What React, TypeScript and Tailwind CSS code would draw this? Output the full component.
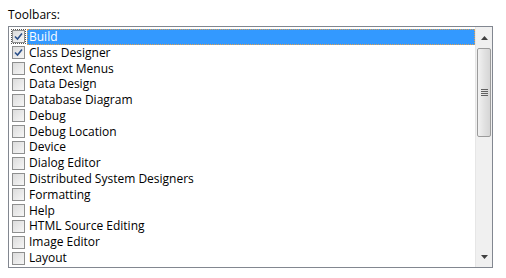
import React from 'react';

const items: { label: string; checked: boolean }[] = [
  { label: 'Build', checked: true },
  { label: 'Class Designer', checked: true },
  { label: 'Context Menus', checked: false },
  { label: 'Data Design', checked: false },
  { label: 'Database Diagram', checked: false },
  { label: 'Debug', checked: false },
  { label: 'Debug Location', checked: false },
  { label: 'Device', checked: false },
  { label: 'Dialog Editor', checked: false },
  { label: 'Distributed System Designers', checked: false },
  { label: 'Formatting', checked: false },
  { label: 'Help', checked: false },
  { label: 'HTML Source Editing', checked: false },
  { label: 'Image Editor', checked: false },
  { label: 'Layout', checked: false },
];

function CheckBox({ checked }: { checked: boolean }) {
  return (
    <div className="flex h-[13px] w-[13px] shrink-0 items-center justify-center border border-[#8e8f8f] bg-[linear-gradient(135deg,#dcdcdc,#f6f6f6)]">
      {checked && (
        <svg width="9" height="9" viewBox="0 0 9 9">
          <path d="M1 4.5 L3.5 7 L8 1.5" fill="none" stroke="#2a4f8a" strokeWidth="1.6" />
        </svg>
      )}
    </div>
  );
}

function ScrollBar() {
  return (
    <div className="flex w-[17px] shrink-0 flex-col border-l border-[#e6e6e6] bg-[#f0f0f0]">
      <div className="flex h-[21px] items-center justify-center">
        <svg width="7" height="4" viewBox="0 0 7 4">
          <path d="M3.5 0 L7 4 L0 4 Z" fill="#404040" />
        </svg>
      </div>
      <div className="mx-[1px] flex h-[89px] items-center justify-center rounded-[2px] border border-[#9b9b9b] bg-[linear-gradient(90deg,#f2f2f2,#e2e2e2_50%,#d6d6d6)]">
        <div className="flex flex-col gap-[1px]">
          <div className="h-[1px] w-[7px] bg-[#606060]" />
          <div className="h-[1px] w-[7px] bg-[#606060]" />
          <div className="h-[1px] w-[7px] bg-[#606060]" />
          <div className="h-[1px] w-[7px] bg-[#606060]" />
        </div>
      </div>
      <div className="flex-1" />
      <div className="flex h-[21px] items-center justify-center">
        <svg width="7" height="4" viewBox="0 0 7 4">
          <path d="M0 0 L7 0 L3.5 4 Z" fill="#404040" />
        </svg>
      </div>
    </div>
  );
}

export default function App() {
  return (
    <div className="h-[278px] w-[506px] bg-white px-[8px] pt-[7px] font-['Open_Sans',sans-serif] text-[12px] text-black">
      <div className="h-[16px] leading-[16px]">Toolbars:</div>
      <div className="mt-[3px] flex h-[242px] w-[485px] border border-[#828790] bg-white">
        <div className="flex-1 overflow-hidden pt-[2px]">
          {items.map((item, i) => (
            <div key={item.label} className="flex h-[15.8px] items-center pl-[2px]">
              <div className={i === 0 ? 'p-[1px] outline-1 -outline-offset-1 outline-[#555] outline-dotted' : 'p-[1px]'}>
                <CheckBox checked={item.checked} />
              </div>
              <div
                className={
                  i === 0
                    ? 'ml-[1px] flex h-[16px] flex-1 items-center border border-dotted border-[#e0a050] bg-[#3399ff] pl-[1px] text-white'
                    : 'ml-[1px] flex h-[16px] flex-1 items-center pl-[2px]'
                }
              >
                {item.label}
              </div>
            </div>
          ))}
        </div>
        <ScrollBar />
      </div>
    </div>
  );
}
